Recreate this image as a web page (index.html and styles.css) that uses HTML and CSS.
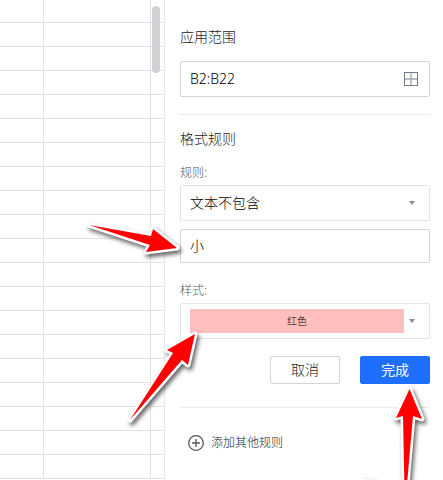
FILE: index.html
```html
<!DOCTYPE html>
<html lang="zh-CN">
<head>
    <meta charset="UTF-8">
    <meta name="viewport" content="width=device-width, initial-scale=1.0">
    <title>条件格式</title>
    <link rel="stylesheet" href="styles.css">
</head>
<body>
    <div class="sheet">
        <table class="grid">
            <tbody>
                <tr><td></td><td></td><td></td></tr>
                <tr><td></td><td></td><td></td></tr>
                <tr><td></td><td></td><td></td></tr>
                <tr><td></td><td></td><td></td></tr>
                <tr><td></td><td></td><td></td></tr>
                <tr><td></td><td></td><td></td></tr>
                <tr><td></td><td></td><td></td></tr>
                <tr><td></td><td></td><td></td></tr>
                <tr><td></td><td></td><td></td></tr>
                <tr><td></td><td></td><td></td></tr>
                <tr><td></td><td></td><td></td></tr>
                <tr><td></td><td></td><td></td></tr>
                <tr><td></td><td></td><td></td></tr>
                <tr><td></td><td></td><td></td></tr>
                <tr><td></td><td></td><td></td></tr>
                <tr><td></td><td></td><td></td></tr>
                <tr><td></td><td></td><td></td></tr>
                <tr><td></td><td></td><td></td></tr>
                <tr><td></td><td></td><td></td></tr>
                <tr><td></td><td></td><td></td></tr>
            </tbody>
        </table>
        <div class="scrollbar"></div>
    </div>

    <form class="panel">
        <label class="title" for="range">应用范围</label>
        <div class="field">
            <input type="text" id="range" value="B2:B22">
            <svg class="range-icon" width="14" height="14" viewBox="0 0 14 14" fill="none">
                <path d="M7 1v12M1 7h12" stroke="#a3a8b3" stroke-width="1.4"/>
                <rect x="0.5" y="0.5" width="13" height="13" stroke="#747b8a"/>
            </svg>
        </div>

        <hr>

        <h2 class="title">格式规则</h2>
        <label class="caption" for="rule">规则:</label>
        <div class="field light">
            <select id="rule">
                <option>文本不包含</option>
            </select>
            <svg class="caret" width="6" height="4" viewBox="0 0 6 4"><path d="M0 0h6L3 4z" fill="#8c8c8c"/></svg>
        </div>
        <input class="keyword" type="text" value="小" aria-label="文本">

        <label class="caption style-caption" for="style">样式:</label>
        <div class="field light">
            <select id="style" class="swatch">
                <option>红色</option>
            </select>
            <svg class="caret" width="6" height="4" viewBox="0 0 6 4"><path d="M0 0h6L3 4z" fill="#8c8c8c"/></svg>
        </div>

        <div class="actions">
            <button type="button">取消</button>
            <button type="submit" class="primary">完成</button>
        </div>

        <hr>

        <button type="button" class="add-rule">
            <svg width="16" height="16" viewBox="0 0 16 16" fill="none" stroke="#555" stroke-width="1.3">
                <circle cx="8" cy="8" r="7.3"/>
                <path d="M8 4v8M4 8h8"/>
            </svg>
            添加其他规则
        </button>
    </form>

    <!-- red pointer arrows -->
    <svg class="arrows" width="443" height="480" viewBox="0 0 443 480">
        <g fill="none" stroke="#ececec" stroke-width="1">
            <circle cx="366" cy="481" r="3"/>
            <circle cx="374" cy="481" r="3"/>
        </g>
        <g class="arrow">
            <path d="M89 225L151 236L153 229L177 248L146 252L150 245Z"/>
        </g>
        <g class="arrow">
            <path d="M130 420L173 353L167 350L195 334L188 365L182 360Z"/>
        </g>
        <g class="arrow">
            <path d="M409.500 389L396 418L403 416L404.500 490H406.500L413 416L422 419Z"/>
        </g>
    </svg>
</body>
</html>
```
FILE: styles.css
```css
:root {
    --primary-color: #1e6fff;
    --text-color: #222;
    --border-color: #d3d4d6;
    --light-border: #e2e3e5;
    --grid-color: #e1e2e5;
}
* {
    box-sizing: border-box;
}
body {
    margin: 0;
    height: 100vh;
    overflow: hidden;
    display: flex;
    position: relative;
    background: #fff;
    color: var(--text-color);
    font-family: "Noto Sans", "Noto Sans CJK SC", sans-serif;
    font-weight: 300;
    font-size: 14px;
    line-height: 20px;
}
input, select, button {
    font: inherit;
    color: inherit;
}
.sheet {
    position: relative;
    width: 164px;
    flex-shrink: 0;
    overflow: hidden;
}
.grid {
    width: 100%;
    table-layout: fixed;
    border-collapse: separate;
    border-spacing: 0;
}
.grid td {
    height: 24px;
    padding: 0;
    border-right: 1px solid var(--grid-color);
    border-bottom: 1px solid var(--grid-color);
}
.grid tr:first-child td {
    height: 23px;
}
.grid td:first-child {
    width: 44px;
}
.grid td:nth-child(2) {
    width: 107px;
}
.grid td:last-child {
    border-right: none;
}
.scrollbar {
    position: absolute;
    top: 6px;
    right: 4px;
    width: 8px;
    height: 67px;
    border-radius: 4px;
    background: #d0d1d4;
}
.panel {
    flex: 1;
    min-width: 0;
    display: flex;
    flex-direction: column;
    padding: 27px 13px 0 15px;
    border-left: 1px solid #e6e7e9;
}
.title {
    margin: 0;
    font-size: 14px;
    font-weight: 300;
    line-height: 20px;
}
.field {
    display: flex;
    align-items: center;
    height: 36px;
    padding: 0 11px 0 9px;
    border: 1px solid var(--border-color);
    border-radius: 2px;
}
.field.light {
    padding-right: 14px;
    border-color: var(--light-border);
}
.title + .field {
    margin-top: 14px;
}
.field input, .field select {
    flex: 1;
    min-width: 0;
    padding: 0;
    border: none;
    outline: none;
    background: none;
    color: #000;
    appearance: none;
}
.range-icon, .caret {
    flex-shrink: 0;
}
hr {
    width: 100%;
    height: 1px;
    margin: 17px 0 14px;
    border: none;
    background: #ececee;
}
.caption {
    margin: 14px 0 2px;
    font-size: 12px;
    line-height: 20px;
    color: #555;
}
.keyword {
    height: 34px;
    margin-top: 8px;
    padding: 0 9px 2px;
    border: 1px solid var(--border-color);
    border-radius: 2px;
    outline: none;
    color: #000;
}
.style-caption {
    margin-top: 18px;
}
.field .swatch {
    height: 24px;
    margin-right: 5px;
    background: #ffbfbf;
    font-size: 10px;
    text-align: center;
    text-align-last: center;
}
.actions {
    display: flex;
    justify-content: flex-end;
    gap: 20px;
    margin: 17px 0 6px;
}
.actions button {
    width: 70px;
    height: 28px;
    padding: 0;
    border: 1px solid var(--border-color);
    border-radius: 2px;
    background: #fff;
}
.actions .primary {
    border-color: var(--primary-color);
    background: var(--primary-color);
    color: #fff;
    font-weight: 400;
}
.add-rule {
    display: flex;
    align-items: center;
    gap: 7px;
    margin: 11px 8px 0;
    padding: 0;
    border: none;
    background: none;
    font-size: 12px;
}
.arrows {
    position: absolute;
    top: 0;
    left: 0;
    pointer-events: none;
}
.arrow {
    filter: drop-shadow(2px 3px 2px rgba(0, 0, 0, 0.6));
}
.arrow path {
    fill: #f00;
    stroke: #fff;
    stroke-width: 5px;
    stroke-linejoin: round;
    paint-order: stroke;
}
```
